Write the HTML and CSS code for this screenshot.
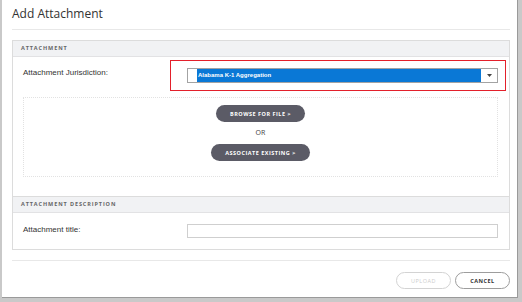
FILE: index.html
```html
<!DOCTYPE html>
<html lang="en">
<head>
    <meta charset="UTF-8">
    <title>Add Attachment</title>
    <link rel="stylesheet" href="styles.css">
</head>
<body>
    <div class="modal">
        <!-- Modal title -->
        <header class="modal-header">
            <h1 class="modal-title">Add Attachment</h1>
        </header>

        <div class="panel">
            <!-- Attachment section -->
            <div class="panel-heading">ATTACHMENT</div>
            <div class="panel-body first">
                <div class="field-row">
                    <label class="field-label">Attachment Jurisdiction:</label>
                    <div class="highlight-box">
                        <div class="select">
                            <span class="select-gap"></span>
                            <span class="select-value">Alabama K-1 Aggregation</span>
                            <span class="select-arrow">
                                <svg width="5" height="3" viewBox="0 0 5 3"><path d="M0 0h5L2.5 3z" fill="#444"/></svg>
                            </span>
                        </div>
                    </div>
                </div>

                <div class="drop-area">
                    <button class="pill-btn dark">BROWSE FOR FILE &gt;</button>
                    <span class="or-text">OR</span>
                    <button class="pill-btn dark">ASSOCIATE EXISTING &gt;</button>
                </div>
            </div>

            <!-- Description section -->
            <div class="panel-heading bordered">ATTACHMENT DESCRIPTION</div>
            <div class="panel-body second">
                <div class="field-row">
                    <label class="field-label">Attachment title:</label>
                    <input type="text" class="text-input">
                </div>
            </div>
        </div>

        <!-- Footer buttons -->
        <footer class="modal-footer">
            <button class="pill-btn outline disabled">UPLOAD</button>
            <button class="pill-btn outline">CANCEL</button>
        </footer>
    </div>
</body>
</html>
```

FILE: styles.css
```css
/* Reset */
* {
    box-sizing: border-box;
    margin: 0;
    padding: 0;
}

body {
    width: 522px;
    height: 302px;
    overflow: hidden;
    background-color: #c9c9c9;
    font-family: 'Liberation Sans', Arial, sans-serif;
}

/* Modal window */
.modal {
    margin-left: 2px;
    width: 516px;
    height: 298px;
    background-color: #ffffff;
    border-right: 1px solid #9a9a9a;
    border-bottom: 1px solid #9a9a9a;
    padding: 0 7px 0 10px;
}

.modal-header {
    height: 30px;
    border-bottom: 1px solid #e8e8e8;
}

.modal-title {
    font-family: 'Open Sans', sans-serif;
    font-size: 12px;
    font-weight: 400;
    color: #333333;
    padding-top: 6px;
    line-height: 16px;
}

/* Bordered panel with two sections */
.panel {
    margin-top: 10px;
    border: 1px solid #dcdcdc;
    height: 210px;
}

.panel-heading {
    height: 16px;
    background-color: #f1f2f4;
    border-bottom: 1px solid #e2e2e4;
    padding-left: 8px;
    font-family: 'Open Sans', sans-serif;
    font-size: 5.5px;
    font-weight: 700;
    letter-spacing: 0.9px;
    color: #666666;
    line-height: 15px;
}

.panel-heading.bordered {
    height: 17px;
    border-top: 1px solid #dcdcdc;
}

.panel-body.first {
    height: 139px;
    padding: 3px 0 0 10px;
}

.panel-body.second {
    padding: 11px 0 0 10px;
}

.field-row {
    display: flex;
    align-items: flex-start;
}

.field-label {
    flex-shrink: 0;
    width: 147px;
    font-size: 8px;
    color: #333333;
    padding-top: 8px;
}

.panel-body.second .field-label {
    width: 164px;
    padding-top: 1px;
}

/* Red outline round the jurisdiction select */
.highlight-box {
    flex-shrink: 0;
    width: 336px;
    height: 31px;
    border: 1px solid #e3202b;
    padding: 7px 7px 8px 16px;
}

.select {
    display: flex;
    height: 15px;
    border: 1px solid #a3a3a3;
    background-color: #ffffff;
}

.select-gap {
    width: 9px;
}

.select-value {
    flex: 1;
    background-color: #0a78d6;
    color: #ffffff;
    font-size: 6px;
    font-weight: 700;
    line-height: 13px;
    padding-left: 1px;
}

.select-arrow {
    width: 16px;
    display: flex;
    align-items: center;
    justify-content: center;
}

/* Dotted upload area */
.drop-area {
    margin-top: 6px;
    width: 475px;
    height: 80px;
    border: 1px dotted #e2e2e2;
    display: flex;
    flex-direction: column;
    align-items: center;
    padding-top: 7px;
}

.or-text {
    font-family: 'Open Sans', sans-serif;
    font-size: 7px;
    color: #444444;
    line-height: 10px;
    margin: 6px 0 6px 0;
}

/* Pill buttons */
.pill-btn {
    font-family: 'Open Sans', sans-serif;
    font-size: 5.5px;
    font-weight: 700;
    letter-spacing: 0.5px;
    border-radius: 9px;
    cursor: pointer;
}

.pill-btn.dark {
    height: 17px;
    background-color: #5b5b66;
    color: #ffffff;
    border: none;
    padding: 0 14px;
}

.pill-btn.outline {
    width: 55px;
    height: 17px;
    background-color: #ffffff;
    color: #333333;
    border: 1px solid #9d9d9d;
}

.pill-btn.disabled {
    color: #cccccc;
    border-color: #d3d3d3;
    font-weight: 400;
}

.text-input {
    flex-shrink: 0;
    width: 311px;
    height: 14px;
    border: 1px solid #cfcfcf;
}

/* Footer */
.modal-footer {
    margin-top: 10px;
    border-top: 1px solid #e8e8e8;
    padding-top: 11px;
    display: flex;
    justify-content: flex-end;
    gap: 4px;
}
```
